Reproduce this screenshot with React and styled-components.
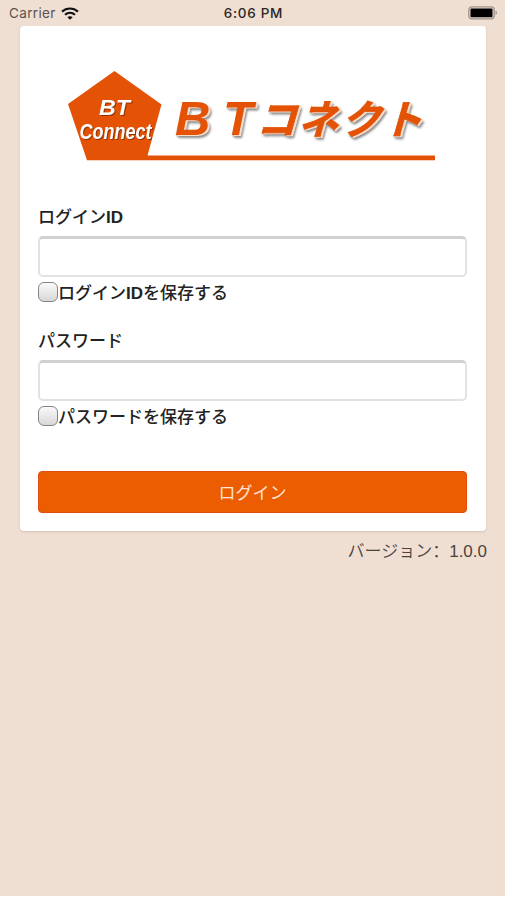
import styled, { createGlobalStyle } from 'styled-components';

const GlobalStyle = createGlobalStyle`
  * {
    box-sizing: border-box;
  }

  body {
    margin: 0;
    background: #fff;
    font-family: 'Liberation Sans', 'Noto Sans CJK JP', sans-serif;
    color: #222;
  }
`;

const Screen = styled.div`
  width: 505px;
  height: 896px;
  background: #efdfd3;
`;

const StatusBar = styled.header`
  display: grid;
  grid-template-columns: 1fr auto 1fr;
  align-items: center;
  height: 26px;
  padding: 0 7px 0 9px;
  font-family: Inter, sans-serif;
  font-size: 13.5px;
`;

const Carrier = styled.div`
  display: flex;
  align-items: center;
  gap: 5px;
  letter-spacing: 0.35px;
  color: #5c534e;
`;

const Time = styled.div`
  font-weight: 500;
  letter-spacing: 0.7px;
  color: #2b2624;
`;

const Battery = styled.svg`
  justify-self: end;
`;

const Card = styled.main`
  width: 466px;
  height: 505px;
  margin-left: 20px;
  padding: 42px 19px 0 18px;
  background: #fff;
  border-radius: 4px;
  box-shadow: 0 1px 2px rgba(90, 60, 40, 0.18);
`;

const LogoImage = styled.svg`
  display: block;
  margin-left: 26px;
`;

const LogoText = styled.g`
  filter: drop-shadow(2px 1px 0 #f9dccb) drop-shadow(1px 2px 1px rgba(60, 60, 60, 0.6));
`;

const BadgeText = styled.g`
  filter: drop-shadow(1px 1px 0.6px rgba(90, 30, 0, 0.6));
`;

const LoginForm = styled.form`
  margin-top: 44px;
`;

const Field = styled.div`
  height: 124px;
`;

const Label = styled.label`
  display: block;
  height: 30px;
  line-height: 24px;
  font-size: 17px;
  font-weight: 500;
`;

const Input = styled.input`
  display: block;
  width: 100%;
  height: 41px;
  padding: 0 10px;
  border: 2px solid #e2e2e2;
  border-top: 3px solid #d0d0d0;
  border-radius: 5px;
  background: #fff;
  font-size: 17px;
  outline: none;
`;

const CheckRow = styled.label`
  display: flex;
  align-items: center;
  height: 29px;
  font-size: 17px;
  font-weight: 500;
  white-space: nowrap;
`;

const Checkbox = styled.input`
  appearance: none;
  flex: none;
  width: 20px;
  height: 20px;
  margin: 0;
  border: 1.5px solid #858585;
  border-radius: 6px;
  background: linear-gradient(#fafafa, #d8d8d8);
`;

const LoginButton = styled.button`
  display: block;
  width: 100%;
  height: 42px;
  margin-top: 17px;
  padding: 0 0 2px;
  border: 1px solid #e24d0c;
  border-radius: 4px;
  background: #eb5d00;
  color: #ffe3d8;
  font-family: inherit;
  font-size: 17px;
  font-weight: 400;
`;

const Version = styled.footer`
  display: flex;
  justify-content: flex-end;
  padding: 9px 18px 0 0;
  line-height: 24px;
  font-size: 17px;
  color: #4b433e;
  font-weight: 350;
`;

const Colon = styled.span`
  margin-top: -2px;
  font-family: 'Noto Sans CJK SC', sans-serif;
`;

const WifiIcon = () => (
  <svg width="18" height="13" viewBox="0 0 18 13" fill="none" stroke="#111" strokeWidth="2.1">
    <path d="M1 4.6C5.6.4 12.4.4 17 4.6" />
    <path d="M4 7.8c2.9-2.6 7.1-2.6 10 0" />
    <path d="M9 12.8 6.4 10.2c1.5-1.4 3.7-1.4 5.2 0Z" fill="#111" stroke="none" />
  </svg>
);

const BatteryIcon = () => (
  <Battery width="30" height="14" viewBox="0 0 30 14">
    <rect x="0.8" y="0.8" width="25.4" height="12" rx="3" fill="#e5d6cb" stroke="#a1958c" strokeWidth="1.3" />
    <rect x="2.5" y="2.5" width="22" height="8.7" rx="1" fill="#000" />
    <path d="M27.5 4.5c2 1 2 3.6 0 4.6Z" fill="#a1958c" />
  </Battery>
);

const katakana = [
  { char: 'コ', x: 192 },
  { char: 'ネ', x: 234 },
  { char: 'ク', x: 277 },
  { char: 'ト', x: 318 }
];

const Logo = () => (
  <LogoImage width="384" height="94" viewBox="0 0 384 94">
    <path d="M50.5 3 97.5 36.5 83.5 87.5H371v4.8H23L4 36Z" fill="#e35205" />
    <BadgeText fill="#fff" fontFamily="'Liberation Sans', sans-serif" fontWeight="700" fontStyle="italic">
      <text x="35" y="47" fontSize="22" textLength="31" lengthAdjust="spacingAndGlyphs">BT</text>
      <text x="15.5" y="70.5" fontSize="22" textLength="72" lengthAdjust="spacingAndGlyphs">Connect</text>
    </BadgeText>
    <LogoText fill="#e35205" fontWeight="700">
      <g fontFamily="'Liberation Sans', sans-serif" fontStyle="italic" fontSize="49">
        <text x="111" y="67">B</text>
        <text x="159" y="67">T</text>
      </g>
      <g fontFamily="'Noto Sans CJK JP', sans-serif" fontSize="40" stroke="#e35205" strokeWidth="0.8">
        {katakana.map(({ char, x }) => (
          <text key={char} transform={`translate(${x} 66) skewX(-16)`}>{char}</text>
        ))}
      </g>
    </LogoText>
  </LogoImage>
);

const App = () => {
  return (
    <>
      <GlobalStyle />
      <Screen>
        <StatusBar>
          <Carrier>
            Carrier
            <WifiIcon />
          </Carrier>
          <Time>6:06 PM</Time>
          <BatteryIcon />
        </StatusBar>
        <Card>
          <Logo />
          <LoginForm onSubmit={(e) => e.preventDefault()}>
            <Field>
              <Label htmlFor="login-id">ログイン<b>ID</b></Label>
              <Input id="login-id" type="text" />
              <CheckRow>
                <Checkbox type="checkbox" />
                <span>ログイン<b>ID</b>を保存する</span>
              </CheckRow>
            </Field>
            <Field>
              <Label htmlFor="password">パスワード</Label>
              <Input id="password" type="password" />
              <CheckRow>
                <Checkbox type="checkbox" />
                <span>パスワードを保存する</span>
              </CheckRow>
            </Field>
            <LoginButton type="submit">ログイン</LoginButton>
          </LoginForm>
        </Card>
        <Version>
          バージョン<Colon>：</Colon>1.0.0
        </Version>
      </Screen>
    </>
  );
};

export default App;
